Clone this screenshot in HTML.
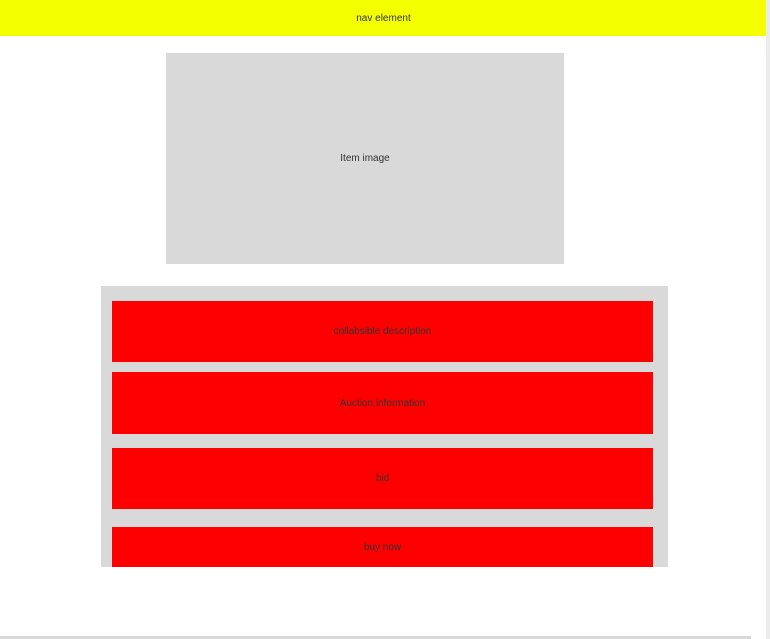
<!DOCTYPE html>
<html><head><style>
body{margin:0;width:770px;height:639px;background:#fff;position:relative;overflow:hidden;font-family:"Liberation Sans",Arial,sans-serif;font-size:10px;color:#333}
div{position:absolute;display:flex;align-items:center;justify-content:center}
</style></head><body>
<div style="left:0;top:0;width:767px;height:36px;background:#f4ff00">nav element</div>
<div style="left:766px;top:0;width:4px;height:639px;background:#ececec"></div>
<div style="left:0;top:636px;width:751px;height:3px;background:#d8d8d8"></div>
<div style="left:166px;top:53px;width:398px;height:211px;background:#d9d9d9">Item image</div>
<div style="left:101px;top:286px;width:567px;height:281px;background:#d9d9d9"></div>
<div style="left:112px;top:301px;width:541px;height:61px;background:#ff0000">collabsible description</div>
<div style="left:112px;top:372px;width:541px;height:62px;background:#ff0000">Auction information</div>
<div style="left:112px;top:448px;width:541px;height:61px;background:#ff0000">bid</div>
<div style="left:112px;top:527px;width:541px;height:40px;background:#ff0000">buy now</div>
</body></html>
